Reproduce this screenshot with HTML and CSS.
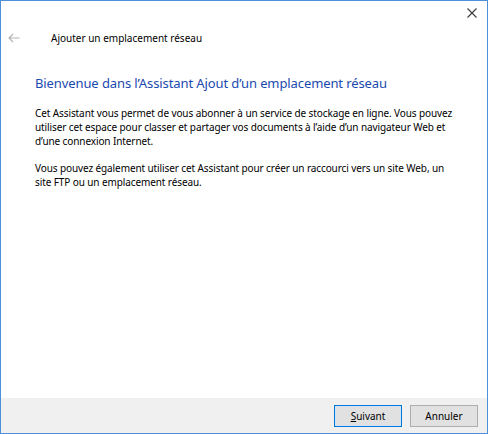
FILE: index.html
```html
<!DOCTYPE html>
<html lang="fr">
<head>
<meta charset="utf-8">
<title>Ajouter un emplacement réseau</title>
<link rel="stylesheet" href="styles.css">
</head>
<body>
<div class="window">
  <div class="titlebar">
    <button class="close" aria-label="Fermer">
      <svg width="10" height="10" viewBox="0 0 10 10"><path d="M0.5 0.5L9.5 9.5M9.5 0.5L0.5 9.5" stroke="#3a3a3a" stroke-width="1.1" fill="none"/></svg>
    </button>
  </div>
  <div class="header">
    <svg class="back" width="12" height="10" viewBox="0 0 12 10"><path d="M11.5 5H1.2M5 1L1 5L5 9" stroke="#b4b4b4" stroke-width="1.2" fill="none"/></svg>
    <span class="header-title">Ajouter un emplacement réseau</span>
  </div>
  <div class="content">
    <h1 class="main-title">Bienvenue dans l’Assistant Ajout d’un emplacement réseau</h1>
    <p class="para">Cet Assistant vous permet de vous abonner à un service de stockage en ligne. Vous pouvez<br>utiliser cet espace pour classer et partager vos documents à l’aide d’un navigateur Web et<br>d’une connexion Internet.</p>
    <p class="para">Vous pouvez également utiliser cet Assistant pour créer un raccourci vers un site Web, un<br>site FTP ou un emplacement réseau.</p>
  </div>
  <div class="footer">
    <button class="btn btn-default"><span class="accel">S</span>uivant</button>
    <button class="btn">Annuler</button>
  </div>
</div>
</body>
</html>
```
FILE: styles.css
```css
html, body {
  margin: 0;
  padding: 0;
  background: #fff;
}
body {
  font-family: "Noto Sans", "Open Sans", sans-serif;
  color: #000;
}
.window {
  width: 488px;
  height: 434px;
  box-sizing: border-box;
  border: 1px solid #4d90d8;
  display: flex;
  flex-direction: column;
  background: #fff;
}
.titlebar {
  height: 24px;
  display: flex;
  justify-content: flex-end;
  align-items: flex-start;
}
.close {
  border: 0;
  background: transparent;
  padding: 0;
  margin: 7px 10px 0 0;
  width: 10px;
  height: 10px;
  display: block;
}
.close svg { display: block; }
.header {
  height: 26px;
  display: flex;
  align-items: center;
  padding-left: 7px;
  gap: 31px;
}
.back { display: block; }
.header-title {
  font-size: 10px;
  color: #000;
}
.content {
  flex: 1;
  padding: 22px 10px 0 34px;
}
.main-title {
  margin: 0;
  font-weight: normal;
  font-size: 13px;
  letter-spacing: -0.1px;
  line-height: 20px;
  color: #1a4ab0;
  white-space: nowrap;
}
.para {
  margin: 13px 0 0 0;
  font-size: 10px;
  letter-spacing: -0.1px;
  line-height: 14px;
  color: #000;
  white-space: nowrap;
}
.para + .para {
  margin-top: 13px;
}
.footer {
  height: 35px;
  box-sizing: border-box;
  background: #f0f0f0;
  display: flex;
  justify-content: flex-end;
  align-items: flex-start;
  padding: 7px 9px 0 0;
  gap: 8px;
}
.btn {
  width: 68px;
  height: 22px;
  box-sizing: border-box;
  border: 1px solid #adadad;
  background: #e1e1e1;
  font-family: "Noto Sans", "Open Sans", sans-serif;
  font-size: 10px;
  color: #000;
  padding: 0;
  margin: 0;
}
.btn-default {
  border: 1px solid #0078d7;
  box-shadow: inset 0 0 0 1px #cfe4f7;
}
.accel { text-decoration: underline; }
```
